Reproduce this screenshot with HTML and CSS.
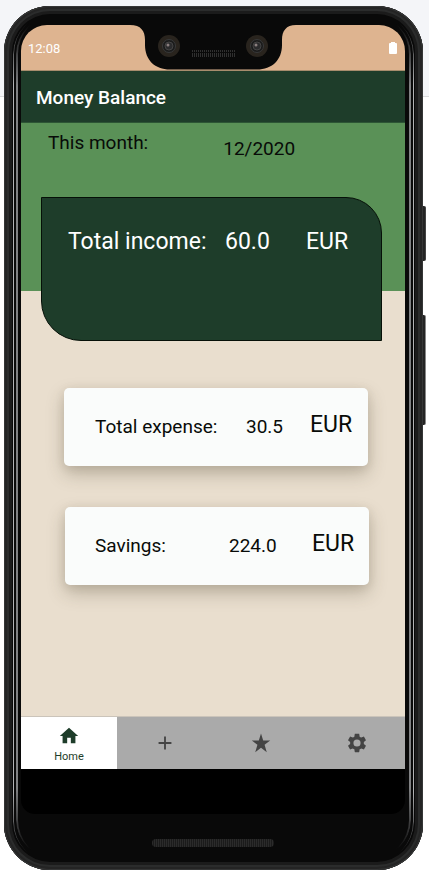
FILE: index.html
```html
<!DOCTYPE html>
<html lang="en">
<head>
<meta charset="utf-8">
<meta name="viewport" content="width=device-width, initial-scale=1">
<title>Money Balance</title>
<link rel="stylesheet" href="styles.css">
</head>
<body>
<div class="phone">
  <span class="side-button power"></span>
  <span class="side-button volume"></span>
  <div class="screen">
    <div class="status-bar">
      <span>12:08</span>
      <svg class="notch" viewBox="0 0 166 45" aria-hidden="true">
        <path d="M0 0C11 0 15 6 15 15V20C15 35 25 44.500 40 44.500H127C142 44.500 152 35 152 20V15C152 6 156 0 166 0Z" fill="#090909"/>
        <g id="camera">
          <circle cx="39" cy="21" r="11" fill="#29241e"/>
          <circle cx="39" cy="21" r="6.500" fill="#1b1b1b" stroke="#38393a"/>
          <circle cx="39" cy="21" r="4" fill="#2b2b2d" stroke="#444"/>
          <circle cx="38" cy="20" r="1.500" fill="#8b7f7f"/>
        </g>
        <use href="#camera" x="88"/>
        <path d="M62 26H105M62 29H105M62 31H105" stroke="#303030" stroke-width="2" stroke-dasharray="1 1"/>
      </svg>
      <svg class="battery" viewBox="0 0 8 12" aria-hidden="true"><path d="M2 1V0H6V1H7Q8 1 8 2V11Q8 12 7 12H1Q0 12 0 11V2Q0 1 1 1Z" fill="#fff"/></svg>
    </div>
    <header class="app-bar"><h1>Money Balance</h1></header>
    <main>
      <section class="hero">
        <div class="month"><span>This month:</span><span class="date">12/2020</span></div>
        <div class="income">
          <span>Total income:</span><span>60.0</span><span>EUR</span>
        </div>
      </section>
      <section class="cards">
        <div class="card expense"><span class="label">Total expense:</span><span class="amount">30.5</span><span class="currency">EUR</span></div>
        <div class="card savings"><span class="label">Savings:</span><span class="amount">224.0</span><span class="currency">EUR</span></div>
      </section>
    </main>
    <nav class="tabs" aria-label="Main">
      <button class="tab active" type="button">
        <svg viewBox="0 0 24 24" aria-hidden="true"><path d="M10 20v-6h4v6h5v-8h3L12 3 2 12h3v8z"/></svg>
        <span>Home</span>
      </button>
      <button class="tab" type="button" aria-label="Add"><svg viewBox="0 0 24 24" aria-hidden="true"><path d="M19 13h-6v6h-2v-6H5v-2h6V5h2v6h6v2z"/></svg></button>
      <button class="tab" type="button" aria-label="Favorites"><svg viewBox="0 0 24 24" aria-hidden="true"><path d="M12 1.500L14.400 9.200H22L15.900 14L18.300 22L12 17.300L5.700 22L8.100 14L2 9.200H9.600Z"/></svg></button>
      <button class="tab" type="button" aria-label="Settings"><svg viewBox="0 0 24 24" aria-hidden="true"><path d="M19.430 12.980c.04-.32.07-.64.07-.98s-.03-.66-.07-.98l2.110-1.650c.19-.15.24-.42.12-.64l-2-3.460c-.12-.22-.39-.3-.61-.22l-2.490 1c-.52-.4-1.080-.73-1.690-.98l-.38-2.650C14.460 2.180 14.250 2 14 2h-4c-.25 0-.46.18-.49.42l-.38 2.650c-.61.25-1.170.59-1.690.98l-2.490-1c-.23-.09-.49 0-.61.22l-2 3.460c-.13.22-.07.49.12.64l2.110 1.650c-.04.32-.07.65-.07.98s.03.66.07.98l-2.110 1.650c-.19.15-.24.42-.12.64l2 3.460c.12.22.39.3.61.22l2.490-1c.52.4 1.080.73 1.690.98l.38 2.650c.03.24.24.42.49.42h4c.25 0 .46-.18.49-.42l.38-2.650c.61-.25 1.170-.59 1.690-.98l2.490 1c.23.09.49 0 .61-.22l2-3.460c.12-.22.07-.49-.12-.64zM12 15.900a3.900 3.900 0 1 1 0-7.800 3.900 3.900 0 0 1 0 7.800z"/></svg></button>
    </nav>
    <div class="system-nav"></div>
  </div>
  <div class="speaker"></div>
</div>
</body>
</html>
```

FILE: styles.css
```css
* { box-sizing: border-box; }

body {
  margin: 0;
  background: linear-gradient(#f4f5f8 96px, #dadbdd 96px, #dadbdd 97px, #fff 97px) no-repeat;
  font-family: Roboto, "Liberation Sans", sans-serif;
  color: #080b08;
}

.phone {
  position: relative;
  margin: 6px 6px 7px 4px;
  padding: 19px 18px 23px 17px;
  border-radius: 46px;
  background: #090909;
  box-shadow: inset 0 0 0 1px #353636, inset 0 0 0 3px #242424, inset 0 0 0 5px #2b2c2c, inset 0 0 0 8px #1b1b1b;
}

/* Metallic edges, fading away round the corners */
.phone::before,
.phone::after {
  content: "";
  position: absolute;
  border: 0 solid;
  -webkit-mask-image: linear-gradient(transparent 8px, #000 70px, #000 calc(100% - 70px), transparent calc(100% - 8px));
  mask-image: linear-gradient(transparent 8px, #000 70px, #000 calc(100% - 70px), transparent calc(100% - 8px));
}

.phone::before {
  inset: 8px 9px 8px 9px;
  border-width: 0 1px;
  border-color: #b2b3b5;
  border-radius: 40px;
}

.phone::after {
  inset: 10px 12px 12px 12px;
  border-width: 0 2px;
  border-color: #808183;
  border-radius: 38px;
}

.side-button {
  position: absolute;
  left: 100%;
  width: 3px;
  background: #242424;
  border-right: 1px solid #444;
  border-radius: 0 2px 2px 0;
}

.power { top: 200px; height: 55px; }
.volume { top: 309px; height: 110px; border-right-color: #888; }

.screen {
  position: relative;
  z-index: 1;
  overflow: hidden;
  border-radius: 26px 26px 14px 14px;
  background: #000;
}

.status-bar {
  position: relative;
  display: flex;
  align-items: center;
  justify-content: space-between;
  height: 46px;
  padding: 1px 8px 0 7px;
  background: #deb490;
  border-bottom: 1px solid #a78d6d;
  color: #fff;
  font-size: 13px;
}

.notch {
  position: absolute;
  top: 0;
  left: calc(50% - 83px);
  width: 166px;
  height: 45px;
}

.battery { width: 8px; height: 12px; }

.app-bar {
  display: flex;
  align-items: center;
  height: 52px;
  padding: 2px 15px 0;
  background: #1e3d2a;
  border-bottom: 1px solid #2d5535;
  color: #fff;
}

h1 { margin: 0; font-size: 19px; font-weight: 500; }

main { background: #e9dece; padding-bottom: 131px; }

.hero {
  display: flex;
  flex-direction: column;
  padding: 8px 23px 0 20px;
  background: #5a9157;
}

.month {
  display: flex;
  align-items: flex-start;
  height: 66px;
  padding-left: 7px;
  font-size: 19px;
  line-height: 24px;
}

.date { margin: 6px 0 0 75px; }

.income {
  display: grid;
  grid-template-columns: 157px 81px 1fr;
  height: 144px;
  margin-bottom: -50px;
  padding: 30px 0 0 26px;
  border: 1px solid #061008;
  border-radius: 0 36px 0 40px;
  background: #1e3d2a;
  color: #fff;
  font-size: 23px;
  line-height: 28px;
}

.cards {
  display: flex;
  flex-direction: column;
  gap: 41px;
  padding: 97px 36px 0 43px;
}

.card {
  display: grid;
  align-items: center;
  height: 78px;
  padding-bottom: 2px;
  border-radius: 5px;
  background: #fafcfb;
  box-shadow: 0 8px 18px rgba(70, 60, 40, .28), 0 2px 10px rgba(70, 60, 40, .1);
  font-size: 19px;
}

.expense { grid-template-columns: 151px 64px 1fr; margin-right: 1px; padding-left: 31px; }
.savings { grid-template-columns: 134px 83px 1fr; margin-left: 1px; padding-left: 30px; }
.currency { padding-bottom: 3px; font-size: 23px; }

.tabs {
  display: grid;
  grid-template-columns: repeat(4, 1fr);
  height: 53px;
  background: #aaa;
  border-top: 1px solid #cbc4ba;
}

.tab {
  display: flex;
  flex-direction: column;
  align-items: center;
  justify-content: center;
  padding: 0;
  border: 0;
  background: transparent;
  color: #444;
  font: 11px/14px Roboto, "Liberation Sans", sans-serif;
}

.tab svg { width: 22px; height: 22px; fill: currentColor; }
.active { gap: 3px; padding-top: 2px; background: #fff; color: #1e3d2a; }

.system-nav { height: 45px; }

.speaker {
  width: 122px;
  height: 8px;
  margin: 25px auto 0;
  border-radius: 4px;
  background: repeating-linear-gradient(90deg, #2b2b2b 0 1px, #1b1b1b 1px 2px);
}
```
